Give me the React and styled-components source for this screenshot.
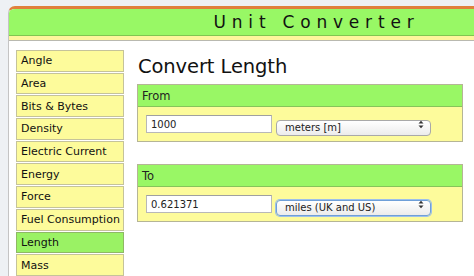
import React from 'react';
import styled, { createGlobalStyle } from 'styled-components';

const Global = createGlobalStyle`
  html, body {
    margin: 0;
    padding: 0;
    background: #eef1f4;
    overflow: hidden;
  }
  body {
    font-family: "DejaVu Sans", Verdana, sans-serif;
  }
`;

const units = [
  'Angle',
  'Area',
  'Bits & Bytes',
  'Density',
  'Electric Current',
  'Energy',
  'Force',
  'Fuel Consumption',
  'Length',
  'Mass',
];

const Page = () => {
  return (
    <Shell>
      <Header>
        <h1>Unit Converter</h1>
      </Header>
      <Strip />
      <Body>
        <Sidebar>
          {units.map((u) => (
            <NavItem key={u} active={u === 'Length'}>
              {u}
            </NavItem>
          ))}
        </Sidebar>
        <Main>
          <h2>Convert Length</h2>
          <Panel>
            <PanelHead>From</PanelHead>
            <PanelBody>
              <TextBox defaultValue="1000" />
              <SelectWrap>
                <Select defaultValue="m">
                  <option value="m">meters [m]</option>
                </Select>
                <Arrows />
              </SelectWrap>
            </PanelBody>
          </Panel>
          <Panel>
            <PanelHead>To</PanelHead>
            <PanelBody>
              <TextBox defaultValue="0.621371" />
              <SelectWrap>
                <Select defaultValue="mi" focused>
                  <option value="mi">miles (UK and US)</option>
                </Select>
                <Arrows />
              </SelectWrap>
            </PanelBody>
          </Panel>
        </Main>
      </Body>
    </Shell>
  );
};

const Arrows = () => (
  <ArrowIcon width="6" height="9" viewBox="0 0 6 9">
    <path d="M0.5 3.5 L3 0.8 L5.5 3.5 Z" fill="#333" />
    <path d="M0.5 5.5 L3 8.2 L5.5 5.5 Z" fill="#333" />
  </ArrowIcon>
);

const Shell = styled.div`
  margin: 6px 0 0 8px;
  width: 606px;
  height: 270px;
  background: #fff;
  border-left: 1px solid #c4c4c4;
  border-top: 3px solid #e0803c;
  border-top-left-radius: 7px;
  overflow: hidden;
`;

const Header = styled.div`
  height: 26px;
  background: #98f865;
  border-bottom: 1px solid #7fc650;
  display: flex;
  align-items: center;
  justify-content: center;

  h1 {
    margin: 0;
    font-size: 17px;
    font-weight: normal;
    letter-spacing: 5.8px;
    color: #111;
    padding-left: 9px;
  }
`;

const Strip = styled.div`
  height: 4px;
  background: #fdf59c;
  border-bottom: 1px solid #b9b9b0;
`;

const Body = styled.div`
  display: flex;
  gap: 13px;
  padding: 9px 0 0 7px;
`;

const Sidebar = styled.div`
  width: 108px;
  display: flex;
  flex-direction: column;
  gap: 1px;
`;

const NavItem = styled.div`
  height: 19.7px;
  flex-shrink: 0;
  display: flex;
  align-items: center;
  padding-left: 4px;
  font-size: 11px;
  color: #111;
  background: ${(p) => (p.active ? '#9af264' : '#fdfb9b')};
  border: 1px solid ${(p) => (p.active ? '#8fb865' : '#c5c39a')};
  white-space: nowrap;
  overflow: hidden;
`;

const Main = styled.div`
  width: 326px;
  display: flex;
  flex-direction: column;

  h2 {
    margin: 5px 0 6px 1px;
    font-family: "DejaVu Sans", Verdana, sans-serif;
    font-weight: normal;
    font-size: 19.5px;
    color: #111;
    letter-spacing: -0.1px;
  }
`;

const Panel = styled.div`
  border: 1px solid #b5b596;
  margin-bottom: 22px;
`;

const PanelHead = styled.div`
  height: 21px;
  background: #99f765;
  border-bottom: 1px solid #86c45a;
  display: flex;
  align-items: center;
  padding-left: 4px;
  font-size: 11.5px;
  color: #222;
`;

const PanelBody = styled.div`
  background: #fdfb9b;
  padding: 8px 8px 8px 8px;
  display: flex;
  align-items: center;
  gap: 4px;
`;

const TextBox = styled.input`
  width: 126px;
  height: 18px;
  box-sizing: border-box;
  border: 1px solid #b8b8b8;
  border-top-color: #a0a0a0;
  padding: 0 4px;
  font-family: "DejaVu Sans", Verdana, sans-serif;
  font-size: 10px;
  color: #222;
  background: #fff;
  outline: none;
`;

const SelectWrap = styled.div`
  position: relative;
  width: 155px;
  height: 16px;
`;

const Select = styled.select`
  appearance: none;
  width: 100%;
  height: 100%;
  box-sizing: border-box;
  border-radius: 4px;
  border: 1px solid ${(p) => (p.focused ? '#6f9fd8' : '#a9a9a9')};
  box-shadow: ${(p) => (p.focused ? '0 0 0 1px #9dc0ea' : 'none')};
  background: linear-gradient(#ffffff, #ececec);
  padding: 0 0 0 8px;
  font-family: "DejaVu Sans", Verdana, sans-serif;
  font-size: 10px;
  color: #222;
  outline: none;
`;

const ArrowIcon = styled.svg`
  position: absolute;
  right: 7px;
  top: 4px;
`;

export default function App() {
  return (
    <>
      <Global />
      <Page />
    </>
  );
}
